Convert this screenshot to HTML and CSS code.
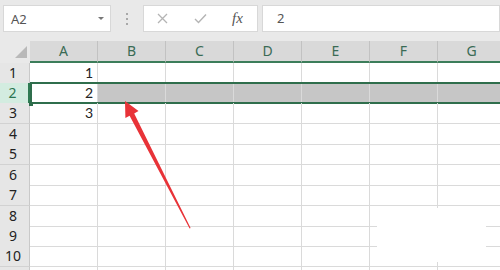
FILE: index.html
```html
<!DOCTYPE html>
<html lang="zh-CN">
<head>
    <meta charset="UTF-8">
    <title>Excel</title>
    <link rel="stylesheet" href="styles.css">
</head>
<body>
    <div class="toolbar">
        <div class="namebox">
            <span>A2</span>
            <span class="caret"></span>
        </div>
        <div class="grip"><i></i><i></i><i></i></div>
        <div class="fxbox">
            <svg class="ic-x" width="11" height="11" viewBox="0 0 11 11"><path d="M1 1L10 10M10 1L1 10" stroke="#b4b4b4" stroke-width="1.3" fill="none"/></svg>
            <svg class="ic-ok" width="13" height="11" viewBox="0 0 13 11"><path d="M1 6L4.5 9.5L12 1.5" stroke="#b4b4b4" stroke-width="1.4" fill="none"/></svg>
            <span class="fx">fx</span>
        </div>
        <div class="formula">2</div>
    </div>

    <div class="sheet">
        <div class="row head">
            <div class="corner"><span class="tri"></span></div>
            <div class="col">A</div>
            <div class="col">B</div>
            <div class="col">C</div>
            <div class="col">D</div>
            <div class="col">E</div>
            <div class="col">F</div>
            <div class="col">G</div>
        </div>
        <div class="row">
            <div class="num">1</div>
            <div class="cell val">1</div><div class="cell"></div><div class="cell"></div><div class="cell"></div><div class="cell"></div><div class="cell"></div><div class="cell"></div>
        </div>
        <div class="row sel">
            <div class="num">2</div>
            <div class="cell val active">2</div><div class="cell"></div><div class="cell"></div><div class="cell"></div><div class="cell"></div><div class="cell"></div><div class="cell"></div>
        </div>
        <div class="row">
            <div class="num">3</div>
            <div class="cell val">3</div><div class="cell"></div><div class="cell"></div><div class="cell"></div><div class="cell"></div><div class="cell"></div><div class="cell"></div>
        </div>
        <div class="row">
            <div class="num">4</div>
            <div class="cell"></div><div class="cell"></div><div class="cell"></div><div class="cell"></div><div class="cell"></div><div class="cell"></div><div class="cell"></div>
        </div>
        <div class="row">
            <div class="num">5</div>
            <div class="cell"></div><div class="cell"></div><div class="cell"></div><div class="cell"></div><div class="cell"></div><div class="cell"></div><div class="cell"></div>
        </div>
        <div class="row">
            <div class="num">6</div>
            <div class="cell"></div><div class="cell"></div><div class="cell"></div><div class="cell"></div><div class="cell"></div><div class="cell"></div><div class="cell"></div>
        </div>
        <div class="row">
            <div class="num">7</div>
            <div class="cell"></div><div class="cell"></div><div class="cell"></div><div class="cell"></div><div class="cell"></div><div class="cell"></div><div class="cell"></div>
        </div>
        <div class="row">
            <div class="num">8</div>
            <div class="cell"></div><div class="cell"></div><div class="cell"></div><div class="cell"></div><div class="cell"></div><div class="cell"></div><div class="cell"></div>
        </div>
        <div class="row">
            <div class="num">9</div>
            <div class="cell"></div><div class="cell"></div><div class="cell"></div><div class="cell"></div><div class="cell"></div><div class="cell"></div><div class="cell"></div>
        </div>
        <div class="row">
            <div class="num">10</div>
            <div class="cell"></div><div class="cell"></div><div class="cell"></div><div class="cell"></div><div class="cell"></div><div class="cell"></div><div class="cell"></div>
        </div>
        <div class="row">
            <div class="num"></div>
            <div class="cell"></div><div class="cell"></div><div class="cell"></div><div class="cell"></div><div class="cell"></div><div class="cell"></div><div class="cell"></div>
        </div>
    </div>

    <!-- mancha branca no canto -->
    <div class="patch"></div>

    <svg class="arrow" width="500" height="270" viewBox="0 0 500 270">
        <polygon points="125,101 138.5,111 134.2,113.4 190.6,228 189.6,228.4 129.6,115.8 125.4,118" fill="#e83338"/>
    </svg>
</body>
</html>
```

FILE: styles.css
```css
body {
    margin: 0;
    width: 500px;
    height: 270px;
    overflow: hidden;
    background: #fff;
    font-family: "Noto Sans", "Liberation Sans", sans-serif;
    position: relative;
}

.toolbar {
    height: 41px;
    box-sizing: border-box;
    background: #e9e9e9;
    display: flex;
    align-items: flex-start;
    padding: 5px 0 0 3px;
}

.namebox {
    width: 108px;
    height: 27px;
    box-sizing: border-box;
    background: #fff;
    border: 1px solid #d8d8d8;
    display: flex;
    align-items: center;
    justify-content: space-between;
    padding: 0 6px 0 7px;
    font-size: 13px;
    color: #555;
}

.caret {
    width: 0;
    height: 0;
    border-left: 3px solid transparent;
    border-right: 3px solid transparent;
    border-top: 3px solid #777;
}

.grip {
    width: 32px;
    display: flex;
    flex-direction: column;
    align-items: center;
    gap: 3px;
    padding-top: 8px;
}

.grip i {
    width: 2px;
    height: 2px;
    background: #a8a8a8;
}

.fxbox {
    width: 115px;
    height: 27px;
    box-sizing: border-box;
    background: #fff;
    border: 1px solid #d8d8d8;
    display: flex;
    align-items: center;
    padding-left: 13px;
}

.ic-ok {
    margin-left: 26px;
}

.fx {
    margin-left: 25px;
    font-family: "Liberation Serif", serif;
    font-style: italic;
    font-size: 15px;
    color: #555;
}

.formula {
    flex: 1;
    margin-left: 4px;
    height: 27px;
    box-sizing: border-box;
    background: #fff;
    border: 1px solid #d8d8d8;
    padding-left: 14px;
    font-size: 13px;
    line-height: 25px;
    color: #555;
}

.sheet {
    display: flex;
    flex-direction: column;
}

.row {
    display: grid;
    grid-template-columns: 30px repeat(7, 68px);
    height: 20.45px;
    position: relative;
}

.row.head {
    height: 21.5px;
}

.corner {
    background: #e9e9e9;
    border-bottom: 2px solid #e9e9e9;
    position: relative;
}

.tri {
    position: absolute;
    right: 3px;
    bottom: 3px;
    width: 0;
    height: 0;
    border-left: 12px solid transparent;
    border-bottom: 12px solid #b9b9b9;
}

.col {
    background: #d9d9d9;
    border-right: 1px solid #c2c2c2;
    border-bottom: 2px solid #3c7d5a;
    text-align: center;
    font-size: 14px;
    line-height: 20px;
    color: #3a6b55;
}

.num {
    background: #e6e6e6;
    border-right: 1px solid #c9c9c9;
    border-bottom: 1px solid #d2d2d2;
    box-sizing: border-box;
    text-align: center;
    padding-right: 3px;
    font-size: 14px;
    line-height: 20px;
    color: #222;
}

.cell {
    border-right: 1px solid #dadada;
    border-bottom: 1px solid #dadada;
    box-sizing: border-box;
}

.val {
    text-align: right;
    padding-right: 4px;
    font-family: "Lato", sans-serif;
    font-size: 14px;
    line-height: 20px;
    color: #222;
}

.sel .cell {
    background: #c6c6c6;
}

.sel .cell.active {
    background: #fff;
}

.sel .num {
    background: #d3ece0;
    color: #2c7451;
    border-right: 2px solid #2f7a52;
}

.sel::after {
    content: "";
    position: absolute;
    left: 30px;
    right: -10px;
    top: -1px;
    bottom: -1px;
    border: 2px solid #2f6e4c;
    border-right: none;
    pointer-events: none;
}

.sel::before {
    content: "";
    position: absolute;
    left: 29px;
    bottom: -3px;
    width: 4px;
    height: 4px;
    background: #2f6e4c;
    z-index: 2;
}

.patch {
    position: absolute;
    left: 377px;
    top: 208px;
    width: 109px;
    height: 54px;
    background: #fff;
}

.arrow {
    position: absolute;
    left: 0;
    top: 0;
    pointer-events: none;
}
```
